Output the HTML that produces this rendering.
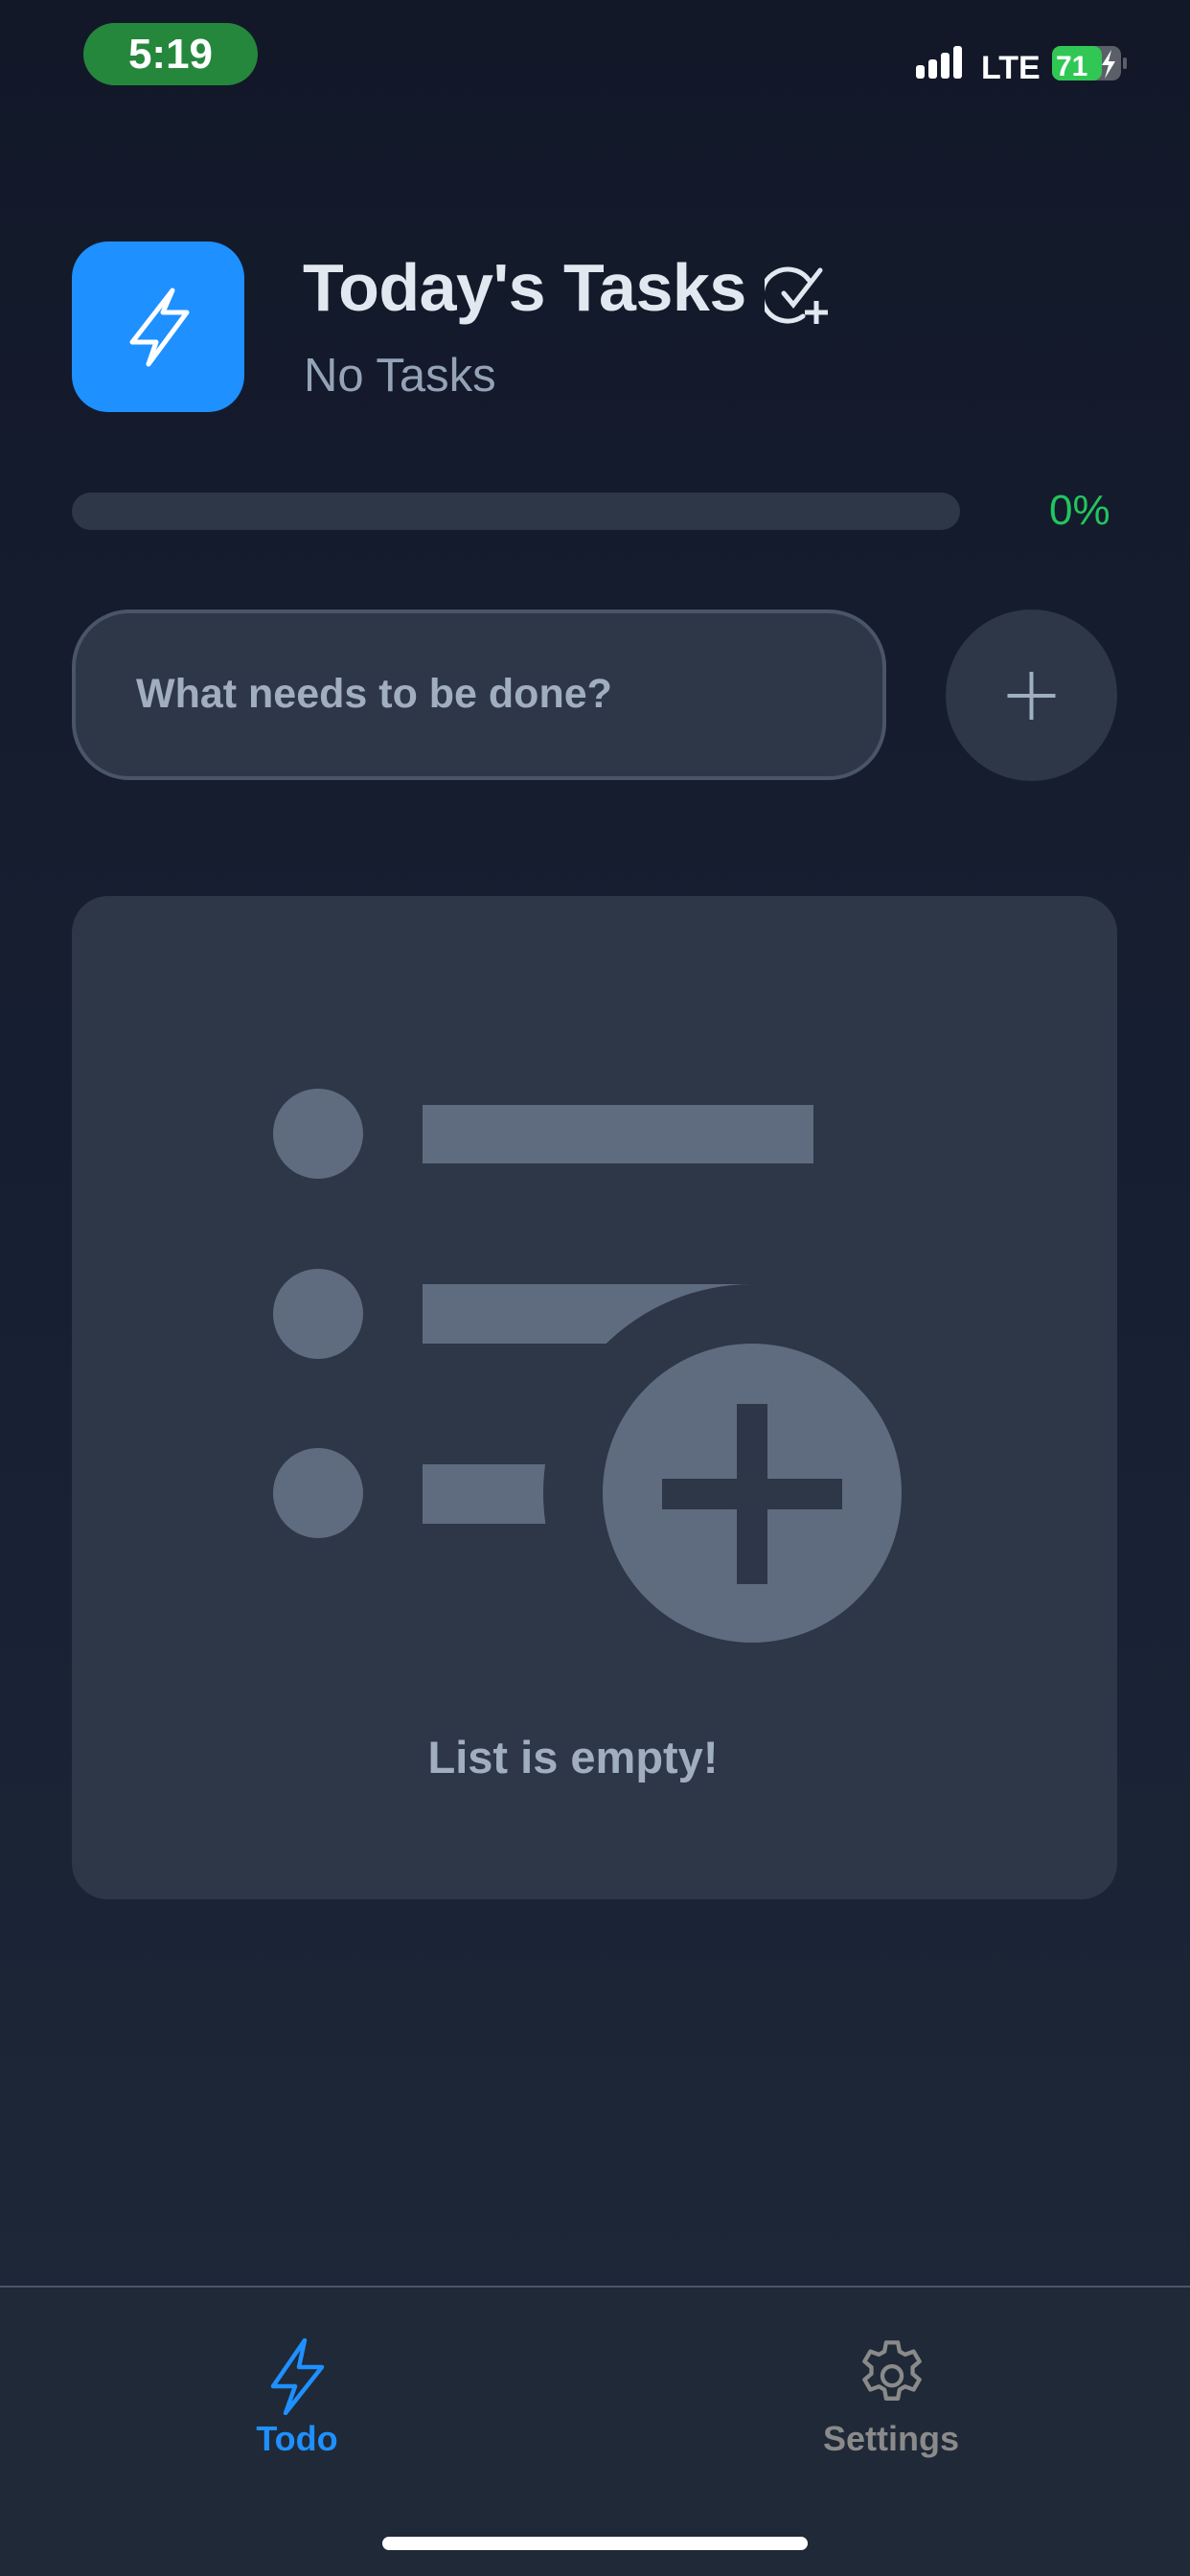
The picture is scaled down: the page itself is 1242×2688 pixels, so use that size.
<!DOCTYPE html>
<html><head><meta charset="utf-8"><style>
*{margin:0;padding:0;box-sizing:border-box}
body{width:1242px;height:2688px;position:relative;overflow:hidden;font-family:"Liberation Sans",sans-serif;background:linear-gradient(180deg,#121828 0%,#172033 50%,#1f2938 100%)}
.a{position:absolute}
</style></head><body>
<div class="a" style="left:87px;top:24px;width:182px;height:65px;border-radius:33px;background:#25873b;color:#fff;font-size:44px;font-weight:bold;text-align:center;line-height:65px">5:19</div>
<svg class="a" style="left:950px;top:44px" width="240" height="48" viewBox="0 0 240 48">
<rect x="6" y="24" width="9" height="14" rx="3" fill="#fff"/><rect x="19" y="18" width="9" height="20" rx="3" fill="#fff"/><rect x="32" y="11" width="9" height="27" rx="3" fill="#fff"/><rect x="45" y="4" width="9" height="34" rx="3" fill="#fff"/>
<text x="74" y="38" font-family="Liberation Sans" font-weight="bold" font-size="34" fill="#fff">LTE</text>
<rect x="148" y="4" width="72" height="36" rx="9" fill="#5a5f68"/><rect x="148" y="4" width="52" height="36" rx="9" fill="#30c755"/><rect x="222" y="16" width="4" height="12" rx="2" fill="#5a5f68"/>
<text x="152" y="35" font-family="Liberation Sans" font-weight="bold" font-size="30" fill="#fff">71</text>
<path d="M210 8 L200 24 L207 24 L203 38 L214 20 L207 20 Z" fill="#fff"/>
</svg>
<div class="a" style="left:75px;top:252px;width:180px;height:178px;border-radius:38px;background:#1e90ff"></div>
<svg class="a" style="left:75px;top:252px" width="180" height="178" viewBox="0 0 180 178"><path d="M105 51 L63 105 L88 105 L80 128 L120 74 L95 74 Z" fill="none" stroke="#fff" stroke-width="5" stroke-linejoin="round"/></svg>
<div class="a" style="left:316px;top:260px;font-size:70px;font-weight:bold;color:#e2e8f0;letter-spacing:-0.5px">Today's Tasks</div>
<svg class="a" style="left:798px;top:272px" width="70" height="70" viewBox="0 0 70 70"><path d="M46 20 A27 27 0 1 0 40 58" fill="none" stroke="#e2e8f0" stroke-width="5" stroke-linecap="round"/><path d="M20 34 L30 46 L58 10" fill="none" stroke="#e2e8f0" stroke-width="5" stroke-linecap="round"/><path d="M54 42 V66 M42 54 H66" stroke="#e2e8f0" stroke-width="5"/></svg>
<div class="a" style="left:317px;top:364px;font-size:49px;color:#94a3b8">No Tasks</div>
<div class="a" style="left:75px;top:514px;width:927px;height:39px;border-radius:20px;background:#2d3748"></div>
<div class="a" style="left:1095px;top:508px;font-size:44px;color:#22c55e">0%</div>
<div class="a" style="left:75px;top:636px;width:850px;height:178px;border-radius:60px;background:#2d3748;border:4px solid #4a5568"></div>
<div class="a" style="left:142px;top:700px;font-size:43px;font-weight:bold;color:#a0aec0">What needs to be done?</div>
<div class="a" style="left:987px;top:636px;width:179px;height:179px;border-radius:50%;background:#2d3748"></div>
<svg class="a" style="left:987px;top:636px" width="179" height="179"><path d="M89.5 65 V115 M64.5 90 H114.5" stroke="#a0aec0" stroke-width="4"/></svg>
<div class="a" style="left:75px;top:935px;width:1091px;height:1047px;border-radius:38px;background:#2d3748"></div>
<svg class="a" style="left:0;top:0" width="1242" height="2000">
<defs><mask id="m"><rect width="1242" height="2000" fill="#fff"/><circle cx="785" cy="1558" r="218" fill="#000"/></mask></defs>
<g fill="#5f6c80">
<circle cx="332" cy="1183" r="47"/><circle cx="332" cy="1371" r="47"/><circle cx="332" cy="1558" r="47"/>
<rect x="441" y="1153" width="408" height="61"/>
<g mask="url(#m)"><rect x="441" y="1340" width="342" height="62"/><rect x="441" y="1528" width="200" height="62"/></g>
<circle cx="785" cy="1558" r="156"/>
</g>
<rect x="769" y="1465" width="32" height="188" fill="#2d3748"/><rect x="691" y="1543" width="188" height="32" fill="#2d3748"/>
</svg>
<div class="a" style="left:0;width:1196px;top:1806px;text-align:center;font-size:47px;font-weight:bold;color:#a0aec0">List is empty!</div>
<div class="a" style="left:0;top:2385px;width:1242px;height:303px;background:#1f2937;border-top:2px solid #4a5568"></div>
<svg class="a" style="left:280px;top:2440px" width="62" height="80" viewBox="0 0 62 80"><path d="M38 2 L5 50 L28 50 L18 78 L56 30 L32 30 Z" fill="none" stroke="#1e90ff" stroke-width="4.5" stroke-linejoin="round"/></svg>
<div class="a" style="left:210px;width:200px;top:2524px;text-align:center;font-size:36px;font-weight:bold;color:#1e90ff">Todo</div>
<svg class="a" style="left:888px;top:2434px" width="86" height="86" viewBox="0 0 24 24"><path d="M10.3 2.3h3.4l.5 2.6 1.6.9 2.5-.9 1.7 2.9-2 1.7v1.9l2 1.7-1.7 2.9-2.5-.9-1.6.9-.5 2.6h-3.4l-.5-2.6-1.6-.9-2.5.9-1.7-2.9 2-1.7V9.5l-2-1.7 1.7-2.9 2.5.9 1.6-.9z" transform="translate(0 .6)" fill="none" stroke="#8a8a8a" stroke-width="1.2" stroke-linejoin="round"/><circle cx="12" cy="12.6" r="2.8" fill="none" stroke="#8a8a8a" stroke-width="1.2"/></svg>
<div class="a" style="left:830px;width:200px;top:2524px;text-align:center;font-size:36px;font-weight:bold;color:#8a8a8a">Settings</div>
<div class="a" style="left:399px;top:2647px;width:444px;height:14px;border-radius:7px;background:#fff"></div>
</body></html>
